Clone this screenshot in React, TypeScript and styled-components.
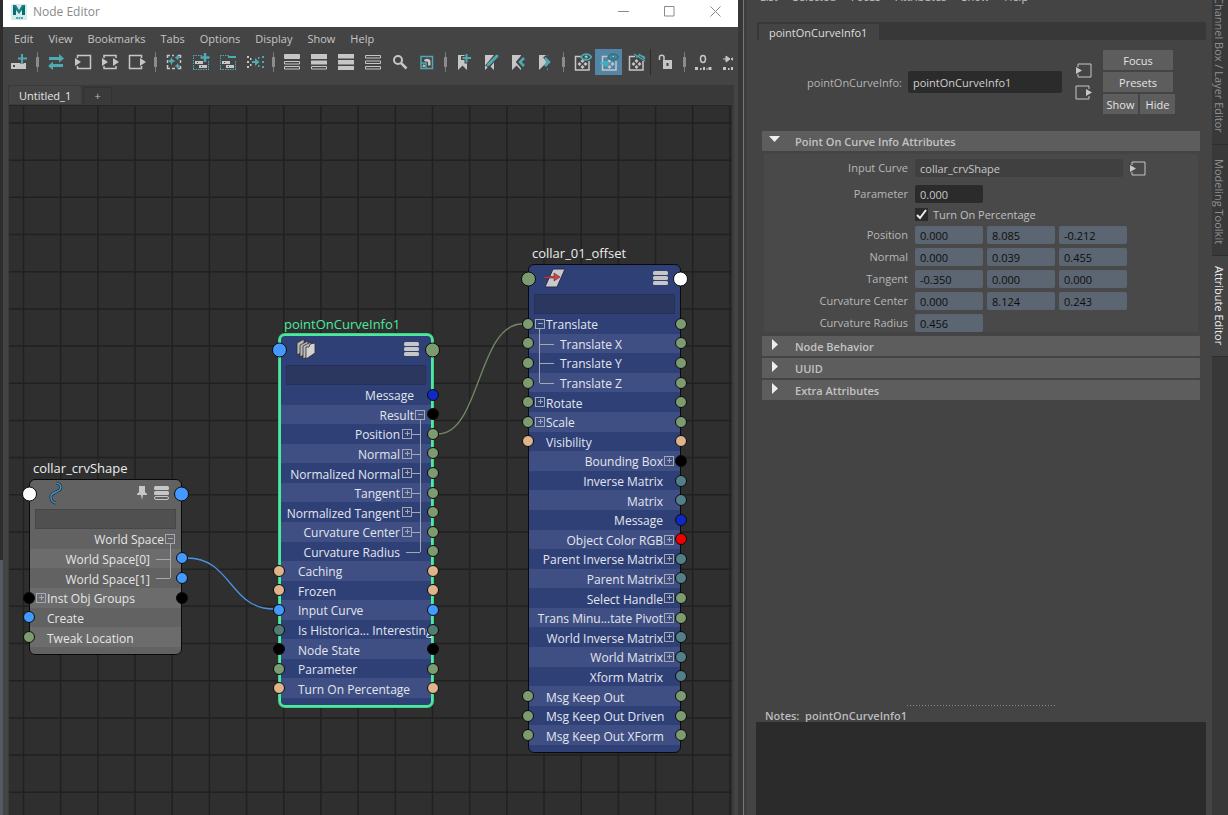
import React from "react";
import styled, { createGlobalStyle, css } from "styled-components";

const teal = "#4fa9b3";
const light = "#c6c6c6";

const GlobalStyle = createGlobalStyle`
  *, *::before, *::after { box-sizing: border-box; }
  body {
    margin: 0;
    background: #444;
    color: #c8c8c8;
    font: 11px/16px "Open Sans", "Noto Sans", sans-serif;
  }
  button, input, textarea { font: inherit; color: inherit; border: 0; margin: 0; padding: 0; background: none; }
  svg { display: block; }
`;

const Workspace = styled.div`
  display: grid;
  grid-template-columns: 3px minmax(0, 735fr) 6px minmax(0, 468fr) 16px;
  height: 100vh;
  overflow: hidden;
`;

const BackdropEdge = styled.div`
  background: linear-gradient(#2d2d2d 560px, #555962 560px);
`;

const Splitter = styled.div`
  background: #373737;
  border-right: 1px solid #777;
`;

/* ---------- Node editor window ---------- */

const EditorWindow = styled.section`
  display: flex;
  flex-direction: column;
  min-width: 0;
  background: #444;
`;

const TitleBar = styled.header`
  display: flex;
  align-items: center;
  flex: none;
  height: 27px;
  padding: 0 0 4px 8px;
  background: #fff;
  color: #8a8a8a;
`;

const WindowTitle = styled.h1`
  flex: 1;
  margin: 0 0 0 6px;
  font-size: 12px;
  line-height: 16px;
  font-weight: 400;
`;

const CaptionButton = styled.button`
  display: grid;
  place-items: center;
  width: 46px;
  height: 23px;
`;

const MenuBar = styled.nav`
  display: flex;
  flex: none;
  gap: 15px;
  height: 22px;
  padding: 4px 0 0 11px;
`;

const MenuItem = styled.button`
  color: #c4c4c4;
  line-height: 16px;
  height: 16px;
`;

const Toolbar = styled.div`
  display: flex;
  align-items: center;
  flex: none;
  height: 26px;
  margin: 0 5px 0 0;
  padding-left: 2px;
  overflow: hidden;
`;

const ToolButton = styled.button<{ $active?: boolean }>`
  display: grid;
  place-items: center;
  flex: none;
  width: 27px;
  height: 26px;
  background: ${(p) => (p.$active ? "#5285a6" : "none")};
`;

const GripSeparator = styled.i`
  flex: none;
  width: 10px;
  height: 20px;
  background:
    linear-gradient(#8c8c8c, #8c8c8c) center / 3px 10px no-repeat,
    linear-gradient(#7a7a7a, #7a7a7a) center / 1px 20px no-repeat;
`;

const LineSeparator = styled.i`
  flex: none;
  width: 3px;
  height: 26px;
  background: linear-gradient(#2b2b2b, #2b2b2b) center / 1px 26px no-repeat;
`;

const EditorTabs = styled.div`
  display: flex;
  align-items: flex-end;
  flex: none;
  height: 19px;
  margin: 10px 4px 0 5px;
  background: #393939;
`;

const EditorTab = styled.button<{ $active?: boolean }>`
  height: ${(p) => (p.$active ? "18px" : "17px")};
  line-height: 16px;
  min-width: 29px;
  margin-left: ${(p) => (p.$active ? "1px" : "2px")};
  padding: ${(p) => (p.$active ? "2px 10px 0" : "0 9px")};
  background: ${(p) => (p.$active ? "#444" : "#3a3a3a")};
  border: ${(p) => (p.$active ? "0" : "1px solid #323232")};
  border-bottom: 0;
  border-radius: 2px 2px 0 0;
  color: ${(p) => (p.$active ? "#e6e6e6" : "#bdbdbd")};
`;

const CanvasFrame = styled.div`
  flex: 1;
  min-height: 0;
  margin: 0 4px 0 5px;
  border: solid #3b3b3b;
  border-width: 1px 2px 0 1px;
  display: flex;
`;

const Canvas = styled.div`
  position: relative;
  flex: 1;
  overflow: hidden;
  border-top: 1px solid #262626;
  background: #2f2f2f;
`;

const CanvasDrawing = styled.svg`
  position: absolute;
  inset: 0;
  width: 100%;
  height: 100%;
`;

/* ---------- Nodes ---------- */

type Theme = "blue" | "gray";

const palettes = {
  blue: { base: "#2f4077", band: "#3f4f83", field: "#2c375f", fieldEdge: "#26305a", text: "#e3e6ee" },
  gray: { base: "#626262", band: "#6c6c6c", field: "#505050", fieldEdge: "#474747", text: "#e6e6e6" },
};

const NodeFrame = styled.article<{ $x: number; $y: number; $theme: Theme; $selected?: boolean }>`
  position: absolute;
  left: ${(p) => p.$x}px;
  top: ${(p) => p.$y}px;
  width: ${(p) => (p.$selected ? 154 : 153)}px;
  padding-bottom: 7px;
  border-radius: 6px;
  background: ${(p) => palettes[p.$theme].base};
  color: ${(p) => palettes[p.$theme].text};
  font-size: 12px;
  line-height: 18px;
  ${(p) =>
    p.$selected
      ? css`
          border: 2px solid #4bea9c;
          box-shadow: 0 0 0 1px #3fcf8a;
        `
      : css`
          border: 1px solid #0a0a0a;
        `}
`;

const NodeTitle = styled.h2<{ $selected?: boolean }>`
  position: absolute;
  left: 3px;
  bottom: 100%;
  margin: 0 0 3px;
  font-size: 13px;
  line-height: 18px;
  font-weight: 400;
  white-space: nowrap;
  color: ${(p) => (p.$selected ? "#4bea9c" : "#ececec")};
`;

const NodeHeader = styled.div`
  position: relative;
  display: flex;
  align-items: center;
  gap: 7px;
  height: 29px;
  padding: 0 12px 3px 15px;
`;

const HeaderSpacer = styled.span`
  flex: 1;
`;

const NodeFilter = styled.input<{ $theme: Theme }>`
  display: block;
  width: calc(100% - 10px);
  height: 20px;
  margin: 0 5px;
  background: ${(p) => palettes[p.$theme].field};
  border: 1px solid ${(p) => palettes[p.$theme].fieldEdge};
`;

const Plugs = styled.ul<{ $height: number }>`
  display: grid;
  grid-template-columns: minmax(0, 1fr);
  grid-auto-rows: 1fr;
  height: ${(p) => p.$height}px;
  margin: 0;
  padding: 0;
  list-style: none;
`;

const PlugRow = styled.li<{ $output: boolean; $band: string }>`
  position: relative;
  display: flex;
  align-items: center;
  min-height: 0;
  justify-content: ${(p) => (p.$output ? "flex-end" : "flex-start")};
  padding: 0 6px;
  background: ${(p) => p.$band};
  white-space: nowrap;
`;

const PlugName = styled.span`
  padding-top: 2px;
  line-height: 17px;
`;

const Gutter = styled.svg<{ $deep: boolean }>`
  flex: none;
  width: ${(p) => (p.$deep ? 25 : 11)}px;
  height: 100%;
  overflow: visible;
  stroke: #a3a8b3;
  fill: none;
  shape-rendering: crispEdges;
`;

const Port = styled.span<{ $side: "left" | "right"; $color: string; $large?: boolean; $shift: number }>`
  position: absolute;
  z-index: 1;
  top: ${(p) => (p.$large ? "14px" : "50%")};
  ${(p) => p.$side}: ${(p) => -p.$shift - (p.$large ? 8 : 7)}px;
  width: ${(p) => (p.$large ? 15 : 12)}px;
  height: ${(p) => (p.$large ? 15 : 12)}px;
  border: 1px solid #0b0b0b;
  border-radius: 50%;
  background: ${(p) => p.$color};
  transform: translateY(-50%);
`;

const C = {
  green: "#7d9b70",
  teal: "#537f8a",
  sea: "#527b72",
  peach: "#dfb48c",
  blue: "#4499ff",
  navy: "#1029c4",
  black: "#000000",
  red: "#f00000",
  white: "#ffffff",
};

type Plug = {
  name: string;
  out?: boolean;
  deep?: "mid" | "last";
  box?: "+" | "-";
  l?: string;
  r?: string;
};

function PlugGutter({ plug }: { plug: Plug }) {
  const out = !!plug.out;
  const deep = !!plug.deep;
  const boxX = deep ? 2.5 : out ? 1.5 : 0.5;
  const trunk = out ? (deep ? 20.5 : 6.5) : 4.5;
  return (
    <Gutter $deep={deep} aria-hidden>
      {plug.deep && <line x1={trunk} x2={trunk} y1="0" y2={plug.deep === "mid" ? "100%" : "50%"} />}
      {plug.box === "-" && <line x1={trunk} x2={trunk} y1="75%" y2="100%" />}
      <svg y="50%" overflow="visible">
        {plug.deep && (out ? <path d={plug.box ? "M11 .5H20" : "M6 .5H20"} /> : <path d="M5 .5H19" />)}
        {plug.box && (
          <>
            <rect x={boxX} y="-4.5" width="9" height="9" />
            <path d={`M${boxX + 2} 0h5`} />
            {plug.box === "+" && <path d={`M${boxX + 4.5} -2.5v5`} />}
          </>
        )}
      </svg>
    </Gutter>
  );
}

type NodeProps = {
  title: string;
  x: number;
  y: number;
  rowsHeight: number;
  theme: Theme;
  selected?: boolean;
  headL: string;
  headR: string;
  icon: React.ReactNode;
  view: React.ReactNode;
  plugs: Plug[];
};

function GraphNode({ title, x, y, rowsHeight, theme, selected, headL, headR, icon, view, plugs }: NodeProps) {
  const pal = palettes[theme];
  const shift = selected ? 1 : 0;
  return (
    <NodeFrame $x={x} $y={y} $theme={theme} $selected={selected}>
      <NodeTitle $selected={selected}>{title}</NodeTitle>
      <NodeHeader>
        <Port $side="left" $color={headL} $large $shift={shift} />
        {icon}
        <HeaderSpacer />
        {view}
        <Port $side="right" $color={headR} $large $shift={shift} />
      </NodeHeader>
      <NodeFilter $theme={theme} aria-label={`Filter ${title} attributes`} />
      <Plugs $height={rowsHeight}>
        {plugs.map((p, i) => (
          <PlugRow key={p.name} $output={!!p.out} $band={i % 2 ? pal.band : pal.base}>
            {p.l && <Port $side="left" $color={p.l} $shift={shift} />}
            {!p.out && <PlugGutter plug={p} />}
            <PlugName>{p.name}</PlugName>
            {p.out && <PlugGutter plug={p} />}
            {p.r && <Port $side="right" $color={p.r} $shift={shift} />}
          </PlugRow>
        ))}
      </Plugs>
    </NodeFrame>
  );
}

const curveShapePlugs: Plug[] = [
  { name: "World Space", out: true, box: "-" },
  { name: "World Space[0]", out: true, deep: "mid", r: C.blue },
  { name: "World Space[1]", out: true, deep: "last", r: C.blue },
  { name: "Inst Obj Groups", box: "+", l: C.black, r: C.black },
  { name: "Create", l: C.blue },
  { name: "Tweak Location", l: C.green },
];

const curveInfoPlugs: Plug[] = [
  { name: "Message", out: true, r: C.navy },
  { name: "Result", out: true, box: "-", r: C.black },
  { name: "Position", out: true, deep: "mid", box: "+", r: C.green },
  { name: "Normal", out: true, deep: "mid", box: "+", r: C.green },
  { name: "Normalized Normal", out: true, deep: "mid", box: "+", r: C.green },
  { name: "Tangent", out: true, deep: "mid", box: "+", r: C.green },
  { name: "Normalized Tangent", out: true, deep: "mid", box: "+", r: C.green },
  { name: "Curvature Center", out: true, deep: "mid", box: "+", r: C.green },
  { name: "Curvature Radius", out: true, deep: "last", r: C.green },
  { name: "Caching", l: C.peach, r: C.peach },
  { name: "Frozen", l: C.peach, r: C.peach },
  { name: "Input Curve", l: C.blue, r: C.blue },
  { name: "Is Historica... Interesting", l: C.sea, r: C.sea },
  { name: "Node State", l: C.black, r: C.black },
  { name: "Parameter", l: C.green, r: C.green },
  { name: "Turn On Percentage", l: C.peach, r: C.peach },
];

const offsetPlugs: Plug[] = [
  { name: "Translate", box: "-", l: C.green, r: C.green },
  { name: "Translate X", deep: "mid", l: C.green, r: C.green },
  { name: "Translate Y", deep: "mid", l: C.green, r: C.green },
  { name: "Translate Z", deep: "last", l: C.green, r: C.green },
  { name: "Rotate", box: "+", l: C.green, r: C.green },
  { name: "Scale", box: "+", l: C.green, r: C.green },
  { name: "Visibility", l: C.peach, r: C.peach },
  { name: "Bounding Box", out: true, box: "+", r: C.black },
  { name: "Inverse Matrix", out: true, r: C.teal },
  { name: "Matrix", out: true, r: C.teal },
  { name: "Message", out: true, r: C.navy },
  { name: "Object Color RGB", out: true, box: "+", r: C.red },
  { name: "Parent Inverse Matrix", out: true, box: "+", r: C.teal },
  { name: "Parent Matrix", out: true, box: "+", r: C.teal },
  { name: "Select Handle", out: true, box: "+", r: C.green },
  { name: "Trans Minu...tate Pivot", out: true, box: "+", r: C.green },
  { name: "World Inverse Matrix", out: true, box: "+", r: C.teal },
  { name: "World Matrix", out: true, box: "+", r: C.teal },
  { name: "Xform Matrix", out: true, r: C.teal },
  { name: "Msg Keep Out", l: C.green, r: C.green },
  { name: "Msg Keep Out Driven", l: C.green, r: C.green },
  { name: "Msg Keep Out XForm", l: C.green, r: C.green },
];

/* ---------- Icons ---------- */

type IconProps = { children: React.ReactNode; w?: number; h?: number };
const Icon = ({ children, w = 18, h = 18 }: IconProps) => (
  <svg width={w} height={h} viewBox={`0 0 ${w} ${h}`} fill="none" aria-hidden>
    {children}
  </svg>
);

const MayaLogo = () => (
  <Icon w={16} h={16}>
    <rect width="16" height="16" rx="1" fill="#d3ecec" />
    <path d="M2 11V1h3l3 5 3-5h3v10h-3V6l-3 4-3-4v5z" fill="#1d8187" />
    <path d="M2 11V1l3 4v6zM14 11V1l-3 4v6z" fill="#0f6a70" />
    <path d="M5 14h7" stroke="#4fa9b3" strokeWidth="2" strokeDasharray="2 .5" />
  </Icon>
);

const CreateNodeIcon = () => (
  <Icon>
    <path fillRule="evenodd" d="M1 10h15v6H1zM3 12v2h2v-2z" fill={light} />
    <path d="M12 0v10.500M7 5.500h10" stroke="#444" strokeWidth="4" />
    <path d="M12 1v9M8 5.500h9" stroke={teal} strokeWidth="2" />
  </Icon>
);
const SwapIcon = () => (
  <Icon>
    <path d="M2 4h10V1l5 4.500-5 4V7H2zM16 11H6V8.500L1 13l5 4v-3h10z" fill={teal} />
  </Icon>
);
const InputsIcon = () => (
  <Icon>
    <path d="M3.500 5V2.500h13v13h-13V13" stroke={light} strokeWidth="1.500" />
    <path d="M1 5l6 4-6 4z" fill={light} />
  </Icon>
);
const InOutIcon = () => (
  <Icon>
    <path d="M3 5V2.500h12V5M3 13v2.500h12V13" stroke={light} strokeWidth="1.500" />
    <path d="M1 5l6 4-6 4zM12 5l6 4-6 4z" fill={light} />
  </Icon>
);
const OutputsIcon = () => (
  <Icon>
    <path d="M13.500 5V2.500h-12v13h12V13" stroke={light} strokeWidth="1.500" />
    <path d="M12 5l6 4-6 4z" fill={light} />
  </Icon>
);
const RearrangeIcon = () => (
  <Icon>
    <path
      d="M2.500 5V2.500H5M7 2.500h2M13 2.500h2.500V5M15.500 7v3M15.500 13v2.500H13M10 15.500H7M5 15.500H2.500V12M2.500 10V7"
      stroke={light}
      strokeWidth="1.500"
    />
    <path
      d="M6.500 4l1 2.500 3 1.500-3 1.500-1 3-1-3-3-1.500 3-1.500zM12.500 1.500l1 2 2 1-2 1-1 2-1-2-2-1 2-1zM12.500 10l1 2 2 1-2 1-1 2-1-2-2-1 2-1z"
      fill={teal}
    />
  </Icon>
);
const AddSelectedIcon = ({ minus }: { minus?: boolean }) => (
  <Icon>
    <path d="M1.500 2v15M16.500 8v9M1 16.500h16M1 2.500h9" stroke={teal} strokeDasharray="1.500 1" />
    <path d="M3 8h8v3H3zM7 12h8v3H7z" fill={light} />
    <path d="M5 9.500h1M9 13.500h1" stroke="#444" />
    {minus ? <path d="M9 4h8" stroke={teal} strokeWidth="2" /> : <path d="M13 0v9M8.500 4.500h9" stroke={teal} strokeWidth="2.500" />}
  </Icon>
);
const DotsArrowIcon = () => (
  <Icon>
    <path d="M1 3h2v2H1zM1 8h2v2H1zM1 13h2v2H1zM4 5h1.500v2H4zM4 11h1.500v2H4z" fill={light} />
    <path d="M6 8h3V5l4.500 4L9 13v-3H6zM12 4h1.500v2H12zM16 3h2v2h-2zM16 8h2v2h-2zM16 13h2v2h-2zM12 12h1.500v2H12z" fill={teal} />
  </Icon>
);
const bars: Record<string, React.ReactNode> = {
  simple: (
    <>
      <rect x="1" y="1" width="16" height="5" rx="1" fill={light} />
      <path d="M1.500 8.500h15V11h-15zM1.500 13.500h15V16h-15z" stroke={light} />
    </>
  ),
  connected: (
    <>
      <path d="M1 1h16v5H1zM1 7.500h16v4H1z" fill={light} />
      <path d="M1.500 13.500h15V16h-15z" stroke={light} />
    </>
  ),
  full: <path d="M1 1h16v4.500H1zM1 7h16v4.500H1zM1 13h16v4H1z" fill={light} />,
  custom: <path d="M1.500 2.500h15V5h-15zM1.500 8h15v2.500h-15zM1.500 13.500h15V16h-15z" stroke={light} />,
};
const BarsIcon = ({ kind }: { kind: string }) => <Icon>{bars[kind]}</Icon>;
const SearchIcon = () => (
  <Icon>
    <circle cx="7" cy="7" r="4" stroke={light} strokeWidth="2" />
    <path d="M10 10l5.500 5.500" stroke={light} strokeWidth="2.500" />
  </Icon>
);
const ZoomViewIcon = () => (
  <Icon>
    <path d="M3 3.500h11.500v12H3zM3 10h5v5.500" stroke={teal} strokeWidth="1.500" />
    <path d="M6 8c0-3 6-3 6.500 0v4.500H10V9z" fill={light} />
    <path d="M5 12h1.500v1.500H5z" stroke={light} />
  </Icon>
);
const BookmarkIcon = ({ kind }: { kind: "add" | "edit" | "prev" | "next" }) => (
  <Icon>
    <path d="M3 2h9v15l-4.500-4.500L3 17z" fill={light} />
    {kind === "add" && (
      <>
        <path d="M11.500 0v10.500M6 5h11" stroke="#444" strokeWidth="4" />
        <path d="M11.500 1v8.500M7.500 5H16" stroke={teal} strokeWidth="2" />
      </>
    )}
    {kind === "edit" && (
      <>
        <path d="M16 1L5 14" stroke="#444" strokeWidth="5" />
        <path d="M15 3L7 11" stroke={teal} strokeWidth="3" strokeLinecap="round" />
        <path d="M5.500 10.500l2 2L4 14z" fill={teal} />
      </>
    )}
    {kind === "prev" && (
      <>
        <path d="M15 3l-5 6 5 6" stroke="#444" strokeWidth="5" />
        <path d="M15 5l-4 4 4 4" stroke={teal} strokeWidth="2.500" />
      </>
    )}
    {kind === "next" && (
      <>
        <path d="M9 3l5 6-5 6" stroke="#444" strokeWidth="5" />
        <path d="M9 5l4 4-4 4" stroke={teal} strokeWidth="2.500" />
      </>
    )}
  </Icon>
);
const EyeBoxIcon = ({ kind }: { kind?: "live" | "off" }) => {
  const ground = kind === "live" ? "#5285a6" : "#444";
  const eye = kind === "live" ? "#2c7683" : teal;
  return (
    <Icon w={20} h={20}>
      <path d="M9 4.500H3.500V18H17V9" stroke={light} strokeWidth="1.500" />
      <path
        d="M10.500 7l2 2-2 2-2-2zM7.500 10l2 2-2 2-2-2zM13.500 10l2 2-2 2-2-2zM10.500 13l2 2-2 2-2-2z"
        fill={light}
      />
      {kind === "off" ? (
        <path d="M8 2l11 7M10 5.500c2-2.500 6-2.500 9 0M13 2l6 5" stroke={teal} strokeWidth="1.300" />
      ) : (
        <>
          <path d="M9 5c2.500-4 8-4 10.500 0-2.500 4-8 4-10.500 0z" fill={ground} stroke={eye} strokeWidth="1.500" />
          <circle cx="14.200" cy="5" r="1.800" fill={eye} />
          <circle cx="14.200" cy="4.500" r=".7" fill="#dfe9ea" />
        </>
      )}
      {kind === "live" && (
        <>
          <path d="M1 11.500h5" stroke="#3fb0bd" strokeWidth="2" />
          <circle cx="7" cy="11.500" r="2.800" fill="#3fb0bd" />
        </>
      )}
    </Icon>
  );
};
const UnlockIcon = () => (
  <Icon>
    <path d="M2.500 7V4c0-2.500 4.500-2.500 4.500 0v5" stroke={light} strokeWidth="1.500" />
    <path fillRule="evenodd" d="M6 7h9v9H6zM9.500 10v3h2v-3z" fill={light} />
  </Icon>
);
const ZeroDotsIcon = () => (
  <Icon>
    <ellipse cx="9" cy="6" rx="2.500" ry="3.500" stroke={light} strokeWidth="1.500" />
    <path d="M1 14h3v3H1zM6 15h1.500v2H6zM9 14h2v3H9zM12.500 15h1v2h-1zM14.500 14h3v3h-3z" fill={light} />
  </Icon>
);
const MergeDotsIcon = () => (
  <Icon>
    <path d="M2 6h4M5 3l4 3-4 3zM15 3l-5 3 5 3z" stroke={light} fill={light} />
    <path d="M2 14h3v3H2zM7 15h1.500v2H7zM10 14h2v3h-2z" fill={light} />
  </Icon>
);

const CurveIcon = () => (
  <Icon w={20} h={24}>
    <path d="M11 2c6 1 6 6 2 8s-8 3-7 7c0 3 3 5 5 5" stroke="#1c3c55" strokeWidth="3" />
    <path d="M11 2c6 1 6 6 2 8s-8 3-7 7c0 3 3 5 5 5" stroke="#4f9bc9" strokeWidth="1.200" />
  </Icon>
);
const SheetsIcon = () => (
  <Icon w={20} h={22}>
    <g fill="#b9b9b9" stroke="#2b2b2b" strokeWidth=".8">
      <path d="M1 5l7-4v12l-7 4z" />
      <path d="M4 7l8-4v12l-8 4z" />
      <path d="M7 8l8-4v13l-8 4z" />
      <path d="M10 9h3l1-3 5-1v10l-9 6z" fill="#d2d2d2" />
    </g>
  </Icon>
);
const TransformIcon = () => (
  <Icon w={22} h={22}>
    <path d="M9 2h12l-8 18H1z" fill="#c9c9c9" stroke="#222c4f" />
    <path d="M0 9.500h10V6l6 4-6 4v-3H0z" fill="#cf4545" stroke="#6a2230" strokeWidth=".6" />
  </Icon>
);
const PinIcon = () => (
  <Icon w={10} h={16}>
    <path d="M2 1h6v6l2 2v1H6l-1 5-1-5H0V9l2-2z" fill={light} />
  </Icon>
);
const ViewBars = ({ last }: { last?: "open" }) => (
  <Icon w={15} h={15}>
    <rect y="0" width="15" height="4" rx="1.500" fill={light} />
    <rect y="5" width="15" height="4" rx="1.500" fill={light} />
    {last ? (
      <rect x=".5" y="10.500" width="14" height="3" rx="1.500" stroke={light} />
    ) : (
      <rect y="10" width="15" height="4" rx="1.500" fill={light} />
    )}
  </Icon>
);
const PlugInIcon = () => (
  <Icon w={17} h={15}>
    <path d="M3 4V1h13v13H3v-3" stroke={light} />
    <path d="M1 4l6 3.500L1 11z" fill={light} />
  </Icon>
);
const PlugOutIcon = () => (
  <Icon w={17} h={15}>
    <path d="M14 4V1H1v13h13v-3" stroke={light} />
    <path d="M11 4l6 3.500-6 3.500z" fill={light} />
  </Icon>
);

/* ---------- Attribute editor ---------- */

const AttributePanel = styled.aside`
  display: flex;
  flex-direction: column;
  min-width: 0;
  padding: 0 6px 0 12px;
  background: #444;
  border-left: 3px solid #3e3e3e;
`;

const PanelMenu = styled.nav`
  display: flex;
  flex: none;
  gap: 15px;
  height: 16px;
  margin-top: -11px;
  padding-left: 1px;
`;

const PanelTabs = styled.div`
  display: flex;
  flex: none;
  height: 18px;
  margin-top: 17px;
  padding: 2px 0 0 2px;
  margin-left: -2px;
  background: #383838;
`;

const PanelTab = styled.button`
  padding: 2px 12px 0 10px;
  line-height: 14px;
  background: #444;
  color: #dedede;
`;

const NameBar = styled.div`
  display: flex;
  align-items: center;
  justify-content: flex-end;
  flex: none;
  height: 64px;
  margin: 10px 31px 0 0;
`;

const NameLabel = styled.label`
  margin-right: 6px;
  padding-top: 1px;
  color: #b4b4b4;
`;

const NameInput = styled.input`
  width: 154px;
  height: 22px;
  padding: 1px 5px 0;
  border-radius: 2px;
  background: #2b2b2b;
  color: #d0d0d0;
`;

const PlugButtons = styled.div`
  display: grid;
  gap: 7px;
  margin: 0 11px 2px 13px;
`;

const ActionGrid = styled.div`
  display: grid;
  grid-template-columns: 35px 35px;
  grid-auto-rows: 20px;
  gap: 2px;
`;

const ActionButton = styled.button<{ $wide?: boolean }>`
  grid-column: ${(p) => (p.$wide ? "span 2" : "auto")};
  margin-right: ${(p) => (p.$wide ? "2px" : "0")};
  padding-top: 2px;
  background: #5d5d5d;
  color: #e4e4e4;
`;

const Sections = styled.div`
  display: grid;
  flex: none;
  gap: 2px;
  margin: 17px 6px 0 3px;
`;

const SectionHeader = styled.button`
  display: flex;
  align-items: center;
  height: 20px;
  padding-top: 2px;
  background: #5d5d5d;
  border-radius: 1px;
  color: #c3c3c3;
  font-weight: 600;
  text-align: left;
`;

const ArrowSlot = styled.span`
  width: 33px;
  padding: 0 0 6px 7px;
`;

const AttributeGrid = styled.div`
  display: grid;
  grid-template-columns: 144px minmax(0, 1fr);
  column-gap: 7px;
  row-gap: 4px;
  margin: 1px 2px 2px;
  padding: 5px 0 0;
  background: #494949;
`;

const AttributeLabel = styled.label`
  grid-column: 1;
  justify-self: end;
  color: #b8b8b8;
  line-height: 18px;
`;

const FieldRow = styled.div<{ $tall?: boolean }>`
  grid-column: 2;
  display: flex;
  align-items: center;
  gap: 4px;
  height: 18px;
  margin-bottom: ${(p) => (p.$tall ? "4px" : "0")};
`;

const fieldColors = {
  plain: css`
    background: #404040;
    color: #c8c8c8;
  `,
  dark: css`
    background: #2b2b2b;
    color: #c8c8c8;
  `,
  locked: css`
    background: #5b6672;
    color: #0e0e0e;
  `,
};

const Field = styled.input<{ $kind: keyof typeof fieldColors }>`
  width: ${(p) => (p.$kind === "plain" ? "208px" : "68px")};
  height: 18px;
  padding: 1px 5px 0;
  border-radius: 2px;
  ${(p) => fieldColors[p.$kind]}
`;

const IconButton = styled.button`
  display: block;
  margin-left: 2px;
`;

const CheckRow = styled.div`
  grid-column: 2;
  display: flex;
  align-items: center;
  gap: 5px;
  height: 15px;
`;

const CheckInput = styled.input`
  appearance: none;
  width: 13px;
  height: 13px;
  background: #2b2b2b
    url("data:image/svg+xml,%3Csvg xmlns='http://www.w3.org/2000/svg' viewBox='0 0 13 13'%3E%3Cpath d='M2 7l3 3 6-8' fill='none' stroke='%23eee' stroke-width='2'/%3E%3C/svg%3E")
    center / 13px no-repeat;
`;

const CheckLabel = styled.label`
  color: #c0c0c0;
`;

const Notes = styled.div`
  display: flex;
  flex-direction: column;
  flex: none;
  height: 110px;
  margin-top: auto;
  margin-left: -3px;
`;

const DragHandle = styled.div`
  width: 148px;
  height: 1px;
  align-self: center;
  background: repeating-linear-gradient(90deg, #8c8c8c 0 1px, transparent 1px 3px);
`;

const NotesLabel = styled.label`
  padding: 2px 0 0 9px;
  height: 16px;
  line-height: 16px;
  font-weight: 600;
  color: #bcbcbc;
  white-space: pre;
`;

const NotesText = styled.textarea`
  flex: 1;
  resize: none;
  background: #2b2b2b;
`;

const SideTabs = styled.div`
  display: flex;
  flex-direction: column;
  background: #383838;
  overflow: hidden;
`;

const SideTab = styled.button<{ $active?: boolean; $height: number }>`
  flex: none;
  display: flex;
  align-items: center;
  justify-content: flex-end;
  height: ${(p) => p.$height}px;
  padding: 0 2px 11px 0;
  writing-mode: vertical-rl;
  line-height: 14px;
  white-space: nowrap;
  background: ${(p) => (p.$active ? "#444" : "#393939")};
  color: ${(p) => (p.$active ? "#ececec" : "#8f8f8f")};
  border-bottom: 1px solid #2e2e2e;
`;

const vectors: [string, string[]][] = [
  ["Position", ["0.000", "8.085", "-0.212"]],
  ["Normal", ["0.000", "0.039", "0.455"]],
  ["Tangent", ["-0.350", "0.000", "0.000"]],
  ["Curvature Center", ["0.000", "8.124", "0.243"]],
  ["Curvature Radius", ["0.456"]],
];

const tools: { label: string; icon?: React.ReactNode; sep?: "grip" | "line"; active?: boolean }[] = [
  { label: "Create node", icon: <CreateNodeIcon /> },
  { label: "s1", sep: "grip" },
  { label: "Synchronize selection", icon: <SwapIcon /> },
  { label: "Input connections", icon: <InputsIcon /> },
  { label: "Input and output connections", icon: <InOutIcon /> },
  { label: "Output connections", icon: <OutputsIcon /> },
  { label: "s2", sep: "grip" },
  { label: "Rearrange graph", icon: <RearrangeIcon /> },
  { label: "Add selected nodes", icon: <AddSelectedIcon /> },
  { label: "Remove selected nodes", icon: <AddSelectedIcon minus /> },
  { label: "Traverse connections", icon: <DotsArrowIcon /> },
  { label: "s3", sep: "grip" },
  { label: "Simple mode", icon: <BarsIcon kind="simple" /> },
  { label: "Connected mode", icon: <BarsIcon kind="connected" /> },
  { label: "Full mode", icon: <BarsIcon kind="full" /> },
  { label: "Custom mode", icon: <BarsIcon kind="custom" /> },
  { label: "Search", icon: <SearchIcon /> },
  { label: "Zoom view", icon: <ZoomViewIcon /> },
  { label: "s4", sep: "grip" },
  { label: "Add bookmark", icon: <BookmarkIcon kind="add" /> },
  { label: "Edit bookmark", icon: <BookmarkIcon kind="edit" /> },
  { label: "Previous bookmark", icon: <BookmarkIcon kind="prev" /> },
  { label: "Next bookmark", icon: <BookmarkIcon kind="next" /> },
  { label: "s5", sep: "grip" },
  { label: "Show shapes", icon: <EyeBoxIcon /> },
  { label: "Show connected", icon: <EyeBoxIcon kind="live" />, active: true },
  { label: "Hide shapes", icon: <EyeBoxIcon kind="off" /> },
  { label: "s6", sep: "line" },
  { label: "Unlock", icon: <UnlockIcon /> },
  { label: "s7", sep: "grip" },
  { label: "Depth zero", icon: <ZeroDotsIcon /> },
  { label: "Decrease depth", icon: <MergeDotsIcon /> },
];

const gridLines = Array.from({ length: 70 }, (_, i) => i);
const gridStep = 37.18;

export default function App() {
  return (
    <>
      <GlobalStyle />
      <Workspace>
        <BackdropEdge />
        <EditorWindow>
          <TitleBar>
            <MayaLogo />
            <WindowTitle>Node Editor</WindowTitle>
            <CaptionButton aria-label="Minimize">
              <Icon w={11} h={11}>
                <path d="M0 5.500h11" stroke="#8a8a8a" />
              </Icon>
            </CaptionButton>
            <CaptionButton aria-label="Maximize">
              <Icon w={11} h={11}>
                <path d="M.5 .5h9.500v9.500H.5z" stroke="#8a8a8a" />
              </Icon>
            </CaptionButton>
            <CaptionButton aria-label="Close">
              <Icon w={11} h={11}>
                <path d="M.5 .5l10 10M10.500 .5l-10 10" stroke="#8a8a8a" />
              </Icon>
            </CaptionButton>
          </TitleBar>
          <MenuBar>
            {["Edit", "View", "Bookmarks", "Tabs", "Options", "Display", "Show", "Help"].map((m) => (
              <MenuItem key={m}>{m}</MenuItem>
            ))}
          </MenuBar>
          <Toolbar>
            {tools.map((t) =>
              t.sep === "grip" ? (
                <GripSeparator key={t.label} />
              ) : t.sep === "line" ? (
                <LineSeparator key={t.label} />
              ) : (
                <ToolButton key={t.label} aria-label={t.label} $active={t.active}>
                  {t.icon}
                </ToolButton>
              ),
            )}
          </Toolbar>
          <EditorTabs>
            <EditorTab $active>Untitled_1</EditorTab>
            <EditorTab aria-label="New tab">+</EditorTab>
          </EditorTabs>
          <CanvasFrame>
            <Canvas>
              <CanvasDrawing aria-hidden>
                <g stroke="#212121" strokeWidth="1.500">
                  {gridLines.map((i) => (
                    <line key={`v${i}`} x1={14.5 + i * gridStep} x2={14.5 + i * gridStep} y1="0" y2="100%" />
                  ))}
                  {gridLines.map((i) => (
                    <line key={`h${i}`} y1={17 + i * gridStep} y2={17 + i * gridStep} x1="0" x2="100%" />
                  ))}
                </g>
                <path d="M429 328C471 328 469 218 513 218" fill="none" stroke="#718a66" strokeWidth="1.300" />
                <path d="M178 452C223 452 220 503 265 503" fill="none" stroke="#4a93df" strokeWidth="1.300" />
              </CanvasDrawing>
              <GraphNode
                title="collar_crvShape"
                x={20}
                y={373}
                rowsHeight={118}
                theme="gray"
                headL={C.white}
                headR={C.blue}
                icon={<CurveIcon />}
                view={
                  <>
                    <PinIcon />
                    <ViewBars last="open" />
                  </>
                }
                plugs={curveShapePlugs}
              />
              <GraphNode
                title="pointOnCurveInfo1"
                x={270}
                y={228}
                rowsHeight={313}
                theme="blue"
                selected
                headL={C.blue}
                headR={C.green}
                icon={<SheetsIcon />}
                view={<ViewBars />}
                plugs={curveInfoPlugs}
              />
              <GraphNode
                title="collar_01_offset"
                x={519}
                y={158}
                rowsHeight={431}
                theme="blue"
                headL={C.green}
                headR={C.white}
                icon={<TransformIcon />}
                view={<ViewBars />}
                plugs={offsetPlugs}
              />
            </Canvas>
          </CanvasFrame>
        </EditorWindow>
        <Splitter />
        <AttributePanel>
          <PanelMenu>
            {["List", "Selected", "Focus", "Attributes", "Show", "Help"].map((m) => (
              <MenuItem key={m}>{m}</MenuItem>
            ))}
          </PanelMenu>
          <PanelTabs>
            <PanelTab>pointOnCurveInfo1</PanelTab>
          </PanelTabs>
          <NameBar>
            <NameLabel htmlFor="node-name">pointOnCurveInfo:</NameLabel>
            <NameInput id="node-name" defaultValue="pointOnCurveInfo1" />
            <PlugButtons>
              <button aria-label="Go to input">
                <PlugInIcon />
              </button>
              <button aria-label="Go to output">
                <PlugOutIcon />
              </button>
            </PlugButtons>
            <ActionGrid>
              <ActionButton $wide>Focus</ActionButton>
              <ActionButton $wide>Presets</ActionButton>
              <ActionButton>Show</ActionButton>
              <ActionButton>Hide</ActionButton>
            </ActionGrid>
          </NameBar>
          <Sections>
            <SectionHeader aria-expanded>
              <ArrowSlot>
                <Icon w={11} h={6}>
                  <path d="M0 0h11L5.500 6z" fill="#eee" />
                </Icon>
              </ArrowSlot>
              Point On Curve Info Attributes
            </SectionHeader>
            <AttributeGrid>
              <AttributeLabel htmlFor="input-curve">Input Curve</AttributeLabel>
              <FieldRow $tall>
                <Field id="input-curve" $kind="plain" defaultValue="collar_crvShape" />
                <IconButton aria-label="Go to input curve">
                  <PlugInIcon />
                </IconButton>
              </FieldRow>
              <AttributeLabel htmlFor="parameter">Parameter</AttributeLabel>
              <FieldRow>
                <Field id="parameter" $kind="dark" defaultValue="0.000" />
              </FieldRow>
              <CheckRow>
                <CheckInput id="turn-on-percentage" type="checkbox" defaultChecked />
                <CheckLabel htmlFor="turn-on-percentage">Turn On Percentage</CheckLabel>
              </CheckRow>
              {vectors.map(([name, values]) => (
                <React.Fragment key={name}>
                  <AttributeLabel htmlFor={`${name}-0`}>{name}</AttributeLabel>
                  <FieldRow>
                    {values.map((v, i) => (
                      <Field key={i} id={`${name}-${i}`} aria-label={`${name} ${i + 1}`} $kind="locked" defaultValue={v} />
                    ))}
                  </FieldRow>
                </React.Fragment>
              ))}
            </AttributeGrid>
            {["Node Behavior", "UUID", "Extra Attributes"].map((s) => (
              <SectionHeader key={s} aria-expanded={false}>
                <ArrowSlot>
                  <Icon w={11} h={11}>
                    <path d="M3 0l6 5.500L3 11z" fill="#eee" />
                  </Icon>
                </ArrowSlot>
                {s}
              </SectionHeader>
            ))}
          </Sections>
          <Notes>
            <DragHandle />
            <NotesLabel htmlFor="notes">Notes:  pointOnCurveInfo1</NotesLabel>
            <NotesText id="notes" />
          </Notes>
        </AttributePanel>
        <SideTabs>
          <SideTab $height={145}>Channel Box / Layer Editor</SideTab>
          <SideTab $height={111}>Modeling Toolkit</SideTab>
          <SideTab $height={101} $active>
            Attribute Editor
          </SideTab>
        </SideTabs>
      </Workspace>
    </>
  );
}
